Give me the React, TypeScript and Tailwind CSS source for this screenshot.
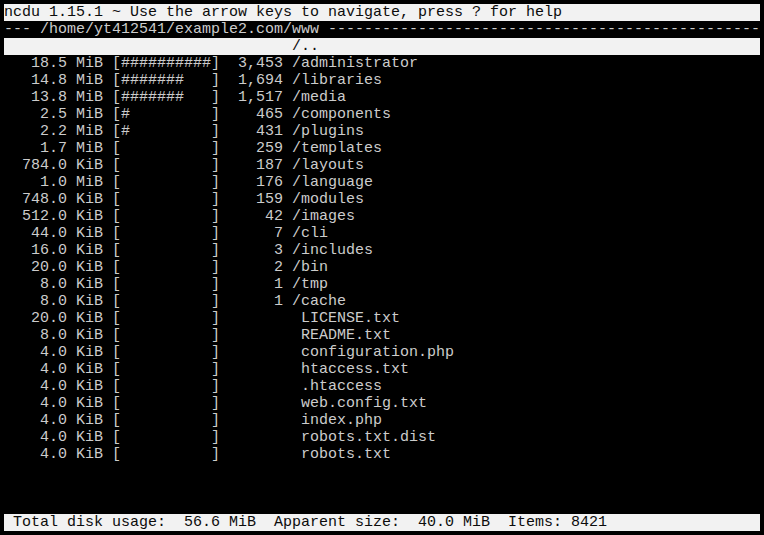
const COLS = 84

type Entry = { size: string; bar: string; count?: string; name: string; dir: boolean }

const entries: Entry[] = [
  { size: '18.5 MiB', bar: '##########', count: '3,453', name: 'administrator', dir: true },
  { size: '14.8 MiB', bar: '#######   ', count: '1,694', name: 'libraries', dir: true },
  { size: '13.8 MiB', bar: '#######   ', count: '1,517', name: 'media', dir: true },
  { size: '2.5 MiB', bar: '#         ', count: '465', name: 'components', dir: true },
  { size: '2.2 MiB', bar: '#         ', count: '431', name: 'plugins', dir: true },
  { size: '1.7 MiB', bar: '          ', count: '259', name: 'templates', dir: true },
  { size: '784.0 KiB', bar: '          ', count: '187', name: 'layouts', dir: true },
  { size: '1.0 MiB', bar: '          ', count: '176', name: 'language', dir: true },
  { size: '748.0 KiB', bar: '          ', count: '159', name: 'modules', dir: true },
  { size: '512.0 KiB', bar: '          ', count: '42', name: 'images', dir: true },
  { size: '44.0 KiB', bar: '          ', count: '7', name: 'cli', dir: true },
  { size: '16.0 KiB', bar: '          ', count: '3', name: 'includes', dir: true },
  { size: '20.0 KiB', bar: '          ', count: '2', name: 'bin', dir: true },
  { size: '8.0 KiB', bar: '          ', count: '1', name: 'tmp', dir: true },
  { size: '8.0 KiB', bar: '          ', count: '1', name: 'cache', dir: true },
  { size: '20.0 KiB', bar: '          ', name: 'LICENSE.txt', dir: false },
  { size: '8.0 KiB', bar: '          ', name: 'README.txt', dir: false },
  { size: '4.0 KiB', bar: '          ', name: 'configuration.php', dir: false },
  { size: '4.0 KiB', bar: '          ', name: 'htaccess.txt', dir: false },
  { size: '4.0 KiB', bar: '          ', name: '.htaccess', dir: false },
  { size: '4.0 KiB', bar: '          ', name: 'web.config.txt', dir: false },
  { size: '4.0 KiB', bar: '          ', name: 'index.php', dir: false },
  { size: '4.0 KiB', bar: '          ', name: 'robots.txt.dist', dir: false },
  { size: '4.0 KiB', bar: '          ', name: 'robots.txt', dir: false },
]

const formatRow = (e: Entry) =>
  `${e.size.padStart(11)} [${e.bar}]  ${(e.count ?? '').padStart(5)} ${e.dir ? '/' : ' '}${e.name}`

const path = '/home/yt412541/example2.com/www'
const pathLine = `--- ${path} `.padEnd(COLS, '-')

const Line = ({ text, inverse }: { text: string; inverse?: boolean }) => (
  <div
    className={
      inverse
        ? 'h-[17px] leading-[17px] whitespace-pre bg-[#f2f2f2] text-[#0c0c0c]'
        : 'h-[17px] leading-[17px] whitespace-pre text-[#cccccc]'
    }
  >
    {text.padEnd(COLS, ' ')}
  </div>
)

export default function App() {
  const blanks = 30 - 3 - entries.length

  return (
    <div className="w-[764px] h-[535px] bg-black p-[4px] overflow-hidden">
      <div
        className="w-[756px] text-[15px]"
        style={{ fontFamily: '"Liberation Mono", "Courier New", monospace' }}
      >
        <Line text="ncdu 1.15.1 ~ Use the arrow keys to navigate, press ? for help" inverse />
        <Line text={pathLine} />
        <Line text={' '.repeat(32) + '/..'} inverse />
        {entries.map((e) => (
          <Line key={e.name} text={formatRow(e)} />
        ))}
        {Array.from({ length: blanks }).map((_, i) => (
          <Line key={'b' + i} text="" />
        ))}
        <Line text=" Total disk usage:  56.6 MiB  Apparent size:  40.0 MiB  Items: 8421" inverse />
      </div>
    </div>
  )
}
